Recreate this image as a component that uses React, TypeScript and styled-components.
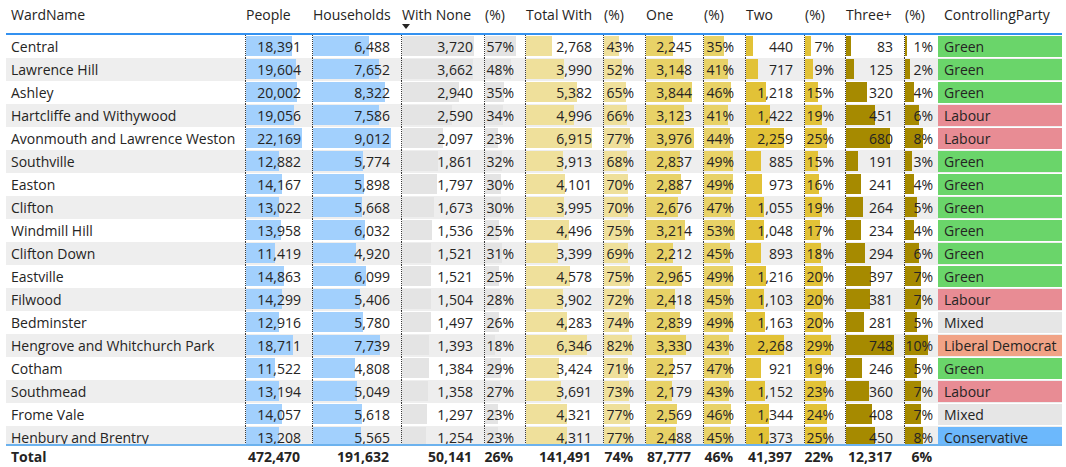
import React from "react";
import styled, { createGlobalStyle } from "styled-components";

const GlobalStyle = createGlobalStyle`
	body {
		margin: 0;
		background: #fff;
		font-family: "Open Sans", "Noto Sans", sans-serif;
		color: #252423;
	}
`;

type Row = [
	string,
	number,
	number,
	number,
	number,
	number,
	number,
	number,
	number,
	number,
	number,
	number,
	number,
	string
];

const rows: Row[] = [
	["Central", 18391, 6488, 3720, 57, 2768, 43, 2245, 35, 440, 7, 83, 1, "Green"],
	["Lawrence Hill", 19604, 7652, 3662, 48, 3990, 52, 3148, 41, 717, 9, 125, 2, "Green"],
	["Ashley", 20002, 8322, 2940, 35, 5382, 65, 3844, 46, 1218, 15, 320, 4, "Green"],
	["Hartcliffe and Withywood", 19056, 7586, 2590, 34, 4996, 66, 3123, 41, 1422, 19, 451, 6, "Labour"],
	["Avonmouth and Lawrence Weston", 22169, 9012, 2097, 23, 6915, 77, 3976, 44, 2259, 25, 680, 8, "Labour"],
	["Southville", 12882, 5774, 1861, 32, 3913, 68, 2837, 49, 885, 15, 191, 3, "Green"],
	["Easton", 14167, 5898, 1797, 30, 4101, 70, 2887, 49, 973, 16, 241, 4, "Green"],
	["Clifton", 13022, 5668, 1673, 30, 3995, 70, 2676, 47, 1055, 19, 264, 5, "Green"],
	["Windmill Hill", 13958, 6032, 1536, 25, 4496, 75, 3214, 53, 1048, 17, 234, 4, "Green"],
	["Clifton Down", 11419, 4920, 1521, 31, 3399, 69, 2212, 45, 893, 18, 294, 6, "Green"],
	["Eastville", 14863, 6099, 1521, 25, 4578, 75, 2965, 49, 1216, 20, 397, 7, "Green"],
	["Filwood", 14299, 5406, 1504, 28, 3902, 72, 2418, 45, 1103, 20, 381, 7, "Labour"],
	["Bedminster", 12916, 5780, 1497, 26, 4283, 74, 2839, 49, 1163, 20, 281, 5, "Mixed"],
	["Hengrove and Whitchurch Park", 18711, 7739, 1393, 18, 6346, 82, 3330, 43, 2268, 29, 748, 10, "Liberal Democrat"],
	["Cotham", 11522, 4808, 1384, 29, 3424, 71, 2257, 47, 921, 19, 246, 5, "Green"],
	["Southmead", 13194, 5049, 1358, 27, 3691, 73, 2179, 43, 1152, 23, 360, 7, "Labour"],
	["Frome Vale", 14057, 5618, 1297, 23, 4321, 77, 2569, 46, 1344, 24, 408, 7, "Mixed"],
	["Henbury and Brentry", 13208, 5565, 1254, 23, 4311, 77, 2488, 45, 1373, 25, 450, 8, "Conservative"],
];

// bar columns: header, max value, bar width at max, colour, is percent
const barCols = [
	{ title: "People", max: 22169, maxW: 56, color: "#a2d0fd", pct: false },
	{ title: "Households", max: 9012, maxW: 78, color: "#a2d0fd", pct: false },
	{ title: "With None", max: 3720, maxW: 72, color: "#e4e4e4", pct: false, sorted: true },
	{ title: "(%)", max: 57, maxW: 31, color: "#e4e4e4", pct: true },
	{ title: "Total With", max: 6915, maxW: 66, color: "#efe09b", pct: false },
	{ title: "(%)", max: 82, maxW: 28, color: "#efe09b", pct: true },
	{ title: "One", max: 3976, maxW: 48, color: "#e8d267", pct: false },
	{ title: "(%)", max: 53, maxW: 31, color: "#e8d267", pct: true },
	{ title: "Two", max: 2268, maxW: 38, color: "#e2c237", pct: false },
	{ title: "(%)", max: 29, maxW: 26, color: "#e2c237", pct: true },
	{ title: "Three+", max: 748, maxW: 48, color: "#a68a00", pct: false },
	{ title: "(%)", max: 10, maxW: 23, color: "#a68a00", pct: true, tight: true },
];

const totals = ["472,470", "191,632", "50,141", "26%", "141,491", "74%", "87,777", "46%", "41,397", "22%", "12,317", "6%"];

const partyColors: Record<string, string> = {
	Green: "#6ad56a",
	Labour: "#e88c94",
	"Liberal Democrat": "#f1a386",
	Mixed: "#e6e6e6",
	Conservative: "#6cb8fc",
};

const fmt = (v: number, pct: boolean) =>
	pct ? `${v}%` : v.toLocaleString("en-US");

const App: React.FC = () => {
	return (
		<>
			<GlobalStyle />
			<Table>
				<HeaderRow>
					<HeaderCell $pad={5}>WardName</HeaderCell>
					{barCols.map((c, i) => (
						<HeaderCell key={i} $pad={1}>
							{c.title}
							{c.sorted && <SortArrow />}
						</HeaderCell>
					))}
					<HeaderCell $pad={6}>ControllingParty</HeaderCell>
				</HeaderRow>
				<Body>
					{rows.map((r, i) => (
						<DataRow key={r[0]} $alt={i % 2 === 1}>
							<NameCell>{r[0]}</NameCell>
							{barCols.map((c, j) => {
								const v = r[j + 1] as number;
								return (
									<BarCell
										key={j}
										$color={c.color}
										$w={Math.round((v / c.max) * c.maxW)}
										$tight={!!c.tight}
									>
										{fmt(v, c.pct)}
									</BarCell>
								);
							})}
							<PartyCell $bg={partyColors[r[13]]}>{r[13]}</PartyCell>
						</DataRow>
					))}
				</Body>
				<TotalRow>
					<NameCell>Total</NameCell>
					{totals.map((t, i) => (
						<TotalCell key={i} $tight={!!barCols[i].tight}>
							{t}
						</TotalCell>
					))}
					<TotalCell />
				</TotalRow>
			</Table>
		</>
	);
};

export default App;

const columns = "239px 67px 89px 83px 41px 78px 42px 58px 42px 59px 41px 59px 34px 124px";

const Table = styled.div`
	width: 1056px;
	margin-left: 6px;
	font-size: 14px;
	white-space: nowrap;
`;

const HeaderRow = styled.div`
	display: grid;
	grid-template-columns: ${columns};
	height: 33px;
	border-bottom: 2px solid #3391f0;
`;

const HeaderCell = styled.div<{ $pad: number }>`
	display: flex;
	flex-direction: column;
	padding: 5px 0 0 ${(p) => p.$pad}px;
	line-height: 20px;
	overflow: hidden;
`;

const SortArrow = styled.span`
	width: 0;
	height: 0;
	margin: -1px 0 0 0;
	border-left: 4px solid transparent;
	border-right: 4px solid transparent;
	border-top: 5px solid #252423;
`;

const Body = styled.div`
	height: 409px;
	overflow: hidden;
`;

const DataRow = styled.div<{ $alt: boolean }>`
	display: grid;
	grid-template-columns: ${columns};
	height: 23px;
	line-height: 23px;
	background: ${(p) => (p.$alt ? "#eeeeee" : "#fff")};
`;

const NameCell = styled.div`
	padding-left: 5px;
	overflow: hidden;
`;

const BarCell = styled.div<{ $color: string; $w: number; $tight: boolean }>`
	border-left: 1px dotted #3a3a3a;
	text-align: right;
	padding-right: ${(p) => (p.$tight ? "5px" : "11px")};
	background: linear-gradient(${(p) => p.$color}, ${(p) => p.$color}) no-repeat 0 1px /
		${(p) => p.$w}px 20px;
`;

const PartyCell = styled.div<{ $bg: string }>`
	padding-left: 6px;
	background: linear-gradient(${(p) => p.$bg}, ${(p) => p.$bg}) no-repeat 0 1px / 100% 21px;
`;

const TotalRow = styled.div`
	display: grid;
	grid-template-columns: ${columns};
	height: 21px;
	line-height: 21px;
	border-top: 2px solid #6cb2ee;
	font-weight: 700;
`;

const TotalCell = styled.div<{ $tight?: boolean }>`
	text-align: right;
	padding-right: ${(p) => (p.$tight ? "6px" : "12px")};
`;
